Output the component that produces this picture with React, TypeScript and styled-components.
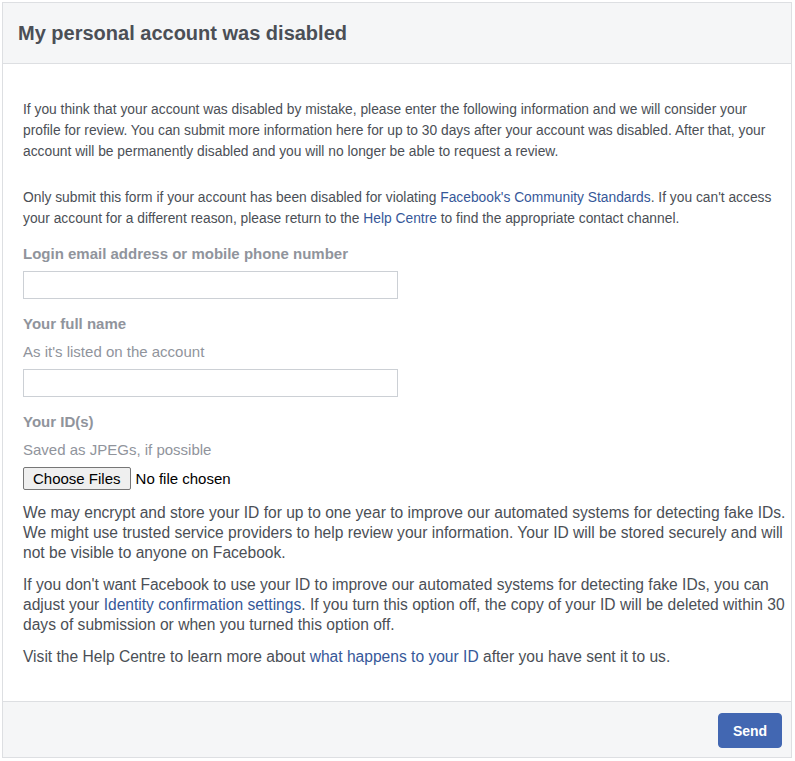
import styled, { createGlobalStyle } from 'styled-components';

const GlobalStyle = createGlobalStyle`
  body {
    margin: 0;
    background: #ffffff;
    font-family: "Liberation Sans", Arial, Helvetica, sans-serif;
  }
`;

function App() {
  return (
    <>
      <GlobalStyle />
      <Card>
        <Header>
          <Title>My personal account was disabled</Title>
        </Header>
        <Body>
          <Intro>
            If you think that your account was disabled by mistake, please enter the following
            information and we will consider your profile for review. You can submit more
            information here for up to 30 days after your account was disabled. After that, your
            account will be permanently disabled and you will no longer be able to request a
            review.
          </Intro>
          <Intro>
            Only submit this form if your account has been disabled for violating{' '}
            <Link>Facebook's Community Standards</Link>. If you can't access your account for a
            different reason, please return to the <Link>Help Centre</Link> to find the
            appropriate contact channel.
          </Intro>

          <Field>
            <Label>Login email address or mobile phone number</Label>
            <TextInput type="text" />
          </Field>

          <Field>
            <Label>Your full name</Label>
            <Hint>As it's listed on the account</Hint>
            <TextInput type="text" />
          </Field>

          <Field>
            <Label>Your ID(s)</Label>
            <Hint>Saved as JPEGs, if possible</Hint>
            <FileRow>
              <FileButton type="button">Choose Files</FileButton>
              <FileStatus>No file chosen</FileStatus>
            </FileRow>
          </Field>

          <Notes>
            <Note>
              We may encrypt and store your ID for up to one year to improve our automated systems
              for detecting fake IDs. We might use trusted service providers to help review your
              information. Your ID will be stored securely and will not be visible to anyone on
              Facebook.
            </Note>
            <Note>
              If you don't want Facebook to use your ID to improve our automated systems for
              detecting fake IDs, you can adjust your <Link>Identity confirmation settings</Link>.
              If you turn this option off, the copy of your ID will be deleted within 30 days of
              submission or when you turned this option off.
            </Note>
            <Note>
              Visit the Help Centre to learn more about <Link>what happens to your ID</Link> after
              you have sent it to us.
            </Note>
          </Notes>
        </Body>
        <Footer>
          <SendButton type="button">Send</SendButton>
        </Footer>
      </Card>
    </>
  );
}

const Card = styled.div`
  box-sizing: border-box;
  width: 790px;
  margin: 2px 0 0 2px;
  border: 1px solid #dddfe2;
  background: #ffffff;
`;

const Header = styled.div`
  display: flex;
  align-items: center;
  height: 60px;
  padding: 0 15px;
  background: #f5f6f7;
  border-bottom: 1px solid #dddfe2;
`;

const Title = styled.h2`
  margin: 0;
  font-size: 20px;
  font-weight: 700;
  color: #4b4f56;
`;

const Body = styled.div`
  padding: 35px 3px 34px 20px;
`;

const Intro = styled.p`
  margin: 0 0 25px;
  font-size: 13.8px;
  line-height: 21px;
  color: #4b4f56;

  &:last-of-type {
    margin-bottom: 14px;
  }
`;

const Link = styled.a`
  color: #365899;
  text-decoration: none;
  cursor: pointer;
`;

const Field = styled.div`
  display: flex;
  flex-direction: column;
  align-items: flex-start;
  gap: 6px;
  margin-bottom: 14px;
`;

const Label = styled.div`
  margin-bottom: 1px;
  font-size: 15px;
  font-weight: 700;
  line-height: 21px;
  color: #90949c;
`;

const Hint = styled.div`
  margin-bottom: 0.5px;
  font-size: 15px;
  line-height: 21px;
  color: #90949c;
`;

const TextInput = styled.input`
  box-sizing: border-box;
  width: 375px;
  height: 28px;
  margin: 0;
  padding: 3px 6px;
  border: 1px solid #ccd0d5;
  border-radius: 0;
  font-family: inherit;
  font-size: 14px;
  outline: none;
`;

const FileRow = styled.div`
  display: flex;
  align-items: center;
  gap: 5px;
  margin-top: 1px;
`;

const FileButton = styled.button`
  box-sizing: border-box;
  height: 23px;
  padding: 0 9px;
  background: #efefef;
  border: 1px solid #767676;
  border-radius: 2px;
  font-family: inherit;
  font-size: 15px;
  color: #000000;
`;

const FileStatus = styled.span`
  font-size: 15px;
  color: #000000;
`;

const Notes = styled.div`
  display: flex;
  flex-direction: column;
  gap: 12px;
  margin-top: -1px;
`;

const Note = styled.p`
  margin: 0;
  font-size: 15.6px;
  line-height: 20px;
  color: #4b4f56;
`;

const Footer = styled.div`
  display: flex;
  justify-content: flex-end;
  padding: 11px 9px 9px;
  background: #f5f6f7;
  border-top: 1px solid #dddfe2;
`;

const SendButton = styled.button`
  box-sizing: border-box;
  width: 64px;
  height: 35px;
  padding: 0;
  background: #4267b2;
  border: 1px solid #4267b2;
  border-radius: 4px;
  font-family: inherit;
  font-size: 14px;
  font-weight: 700;
  color: #ffffff;
`;

export default App;
